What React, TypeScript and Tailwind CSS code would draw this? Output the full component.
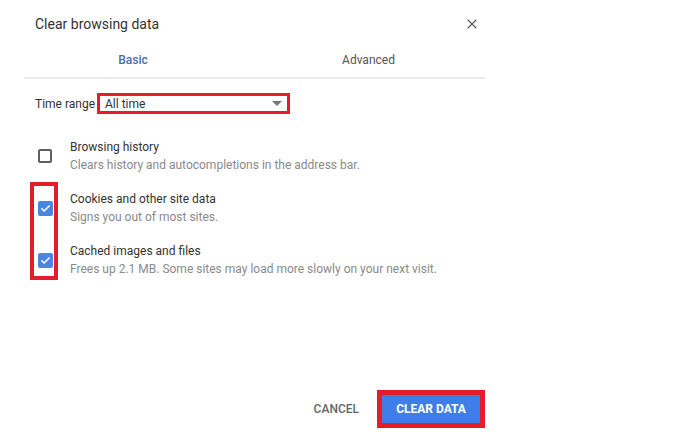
import { X } from 'lucide-react'

function Check({ checked }: { checked: boolean }) {
  if (!checked) {
    return <div className="w-[14px] h-[14px] rounded-[2px] border-2 border-[#5f5f5f] bg-white" />
  }
  return (
    <div className="w-[15px] h-[15px] rounded-[2px] bg-[#4a86e0] flex items-center justify-center">
      <svg width="11" height="11" viewBox="0 0 24 24" fill="none" stroke="white" strokeWidth={3.5}>
        <path d="M4 12.5l5 5L20 6.5" strokeLinecap="round" strokeLinejoin="round" />
      </svg>
    </div>
  )
}

function Item({ title, sub, checked }: { title: string; sub: string; checked: boolean }) {
  return (
    <div className="flex items-center h-[40px]">
      <div className="w-[46px] pl-[14px] flex items-center">
        <Check checked={checked} />
      </div>
      <div className="flex flex-col leading-[18px]">
        <span className="text-[12px] text-[#333]">{title}</span>
        <span className="text-[12px] text-[#8a8a8a]">{sub}</span>
      </div>
    </div>
  )
}

export default function App() {
  return (
    <div className="w-[700px] h-[439px] bg-white font-['Roboto','Liberation_Sans',sans-serif]">
      <div className="ml-[24px] w-[461px] h-[439px] flex flex-col">
        <div className="flex items-center justify-between h-[46px] pl-[11px] pr-[5px] pt-[2px]">
          <span className="text-[14px] text-[#333]">Clear browsing data</span>
          <X className="w-[16px] h-[16px] text-[#555]" strokeWidth={1.6} />
        </div>
        <div className="flex h-[33px] border-b-2 border-[#ebebeb] pb-[4px]">
          <div className="w-[218px] flex items-center justify-center text-[12px] font-medium text-[#4a6fa5]">Basic</div>
          <div className="flex-1 flex items-center justify-center text-[12px] text-[#555] pl-[10px]">Advanced</div>
        </div>
        <div className="flex items-center mt-[14px] pl-[11px]">
          <span className="text-[12px] text-[#333]">Time range</span>
          <div className="ml-[2px] w-[193px] h-[21px] border-[3px] border-[#e31e2a] flex items-center justify-between pl-[5px] pr-[5px]">
            <span className="text-[12px] text-[#333]">All time</span>
            <svg width="10" height="6" viewBox="0 0 10 6">
              <path d="M0 0h10L5 5z" fill="#777" />
            </svg>
          </div>
        </div>
        <div className="mt-[22px] flex flex-col gap-[12px]">
          <Item title="Browsing history" sub="Clears history and autocompletions in the address bar." checked={false} />
          <div className="relative flex flex-col gap-[12px]">
            <div className="absolute left-[6px] top-[-6px] w-[28px] h-[98px] border-[4px] border-[#e31e2a]" />
            <Item title="Cookies and other site data" sub="Signs you out of most sites." checked />
            <Item title="Cached images and files" sub="Frees up 2.1 MB. Some sites may load more slowly on your next visit." checked />
          </div>
        </div>
        <div className="mt-auto mb-[11px] flex items-center justify-end">
          <span className="text-[12px] font-medium text-[#666] mr-[18px]">CANCEL</span>
          <div className="w-[108px] h-[38px] border-[5px] border-[#e31e2a] bg-[#3f7ee8] flex items-center justify-center">
            <span className="text-[12px] font-bold text-white">CLEAR DATA</span>
          </div>
        </div>
      </div>
    </div>
  )
}
